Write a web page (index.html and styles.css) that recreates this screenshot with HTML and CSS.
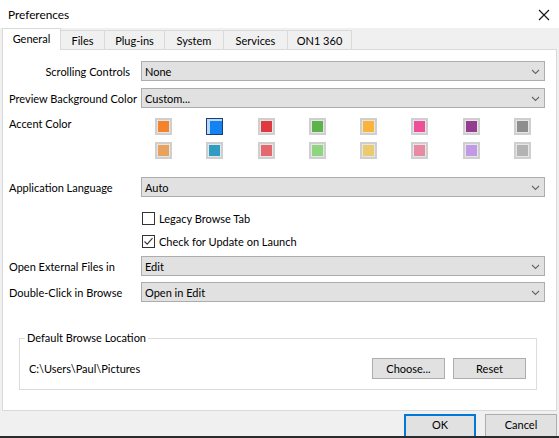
FILE: index.html
```html
<!DOCTYPE html>
<html>
<head>
<meta charset="utf-8">
<link rel="stylesheet" href="styles.css">
</head>
<body>
<div class="window">
  <div class="titlebar">
    <span class="title">Preferences</span>
    <svg class="close" width="12" height="12" viewBox="0 0 12 12"><path d="M1 1 L11 11 M11 1 L1 11" stroke="#111" stroke-width="1.1" fill="none"/></svg>
  </div>
  <div class="tabs">
    <div class="tab active t-general">General</div>
    <div class="tab t-files">Files</div>
    <div class="tab t-plug">Plug-ins</div>
    <div class="tab t-system">System</div>
    <div class="tab t-services">Services</div>
    <div class="tab t-on1">ON1 360</div>
  </div>
  <div class="panel">
    <div class="row r1">
      <div class="label right">Scrolling Controls</div>
      <div class="select"><span>None</span><svg class="chev" width="9" height="6" viewBox="0 0 9 6"><path d="M1 1 L4.5 4.5 L8 1" stroke="#666" stroke-width="1.1" fill="none"/></svg></div>
    </div>
    <div class="row r2">
      <div class="label">Preview Background Color</div>
      <div class="select"><span>Custom...</span><svg class="chev" width="9" height="6" viewBox="0 0 9 6"><path d="M1 1 L4.5 4.5 L8 1" stroke="#666" stroke-width="1.1" fill="none"/></svg></div>
    </div>
    <div class="row r-accent">
      <div class="label accent-label">Accent Color</div>
      <div class="swatches">
        <div class="sw" style="background:#f5832a"></div>
        <div class="sw sel" style="background:#1383f3"></div>
        <div class="sw" style="background:#df3a40"></div>
        <div class="sw" style="background:#5db34a"></div>
        <div class="sw" style="background:#fbb33b"></div>
        <div class="sw" style="background:#ef4e98"></div>
        <div class="sw" style="background:#943c92"></div>
        <div class="sw" style="background:#8e8e8e"></div>
        <div class="sw" style="background:#e7a35e"></div>
        <div class="sw" style="background:#2f9cc3"></div>
        <div class="sw" style="background:#e56870"></div>
        <div class="sw" style="background:#8fd57f"></div>
        <div class="sw" style="background:#eacb6f"></div>
        <div class="sw" style="background:#e78ba5"></div>
        <div class="sw" style="background:#c299e4"></div>
        <div class="sw" style="background:#b3b3b3"></div>
      </div>
    </div>
    <div class="row r-lang">
      <div class="label">Application Language</div>
      <div class="select"><span>Auto</span><svg class="chev" width="9" height="6" viewBox="0 0 9 6"><path d="M1 1 L4.5 4.5 L8 1" stroke="#666" stroke-width="1.1" fill="none"/></svg></div>
    </div>
    <div class="row r-cb1">
      <div class="label"></div>
      <div class="check"><span class="box"></span><span>Legacy Browse Tab</span></div>
    </div>
    <div class="row r-cb2">
      <div class="label"></div>
      <div class="check"><span class="box"><svg width="11" height="11" viewBox="0 0 11 11"><path d="M1.5 5.5 L4.2 8.2 L9.5 2.2" stroke="#333" stroke-width="1.1" fill="none"/></svg></span><span>Check for Update on Launch</span></div>
    </div>
    <div class="row r-ext">
      <div class="label">Open External Files in</div>
      <div class="select"><span>Edit</span><svg class="chev" width="9" height="6" viewBox="0 0 9 6"><path d="M1 1 L4.5 4.5 L8 1" stroke="#666" stroke-width="1.1" fill="none"/></svg></div>
    </div>
    <div class="row r-dbl">
      <div class="label">Double-Click in Browse</div>
      <div class="select"><span>Open in Edit</span><svg class="chev" width="9" height="6" viewBox="0 0 9 6"><path d="M1 1 L4.5 4.5 L8 1" stroke="#666" stroke-width="1.1" fill="none"/></svg></div>
    </div>
    <fieldset class="group">
      <legend>Default Browse Location</legend>
      <div class="group-row">
        <span class="path">C:\Users\Paul\Pictures</span>
        <div class="group-buttons">
          <div class="btn">Choose...</div>
          <div class="btn">Reset</div>
        </div>
      </div>
    </fieldset>
  </div>
  <div class="footer">
    <div class="footer-buttons">
      <div class="btn big ok">OK</div>
      <div class="btn big">Cancel</div>
    </div>
  </div>
</div>
</body>
</html>
```

FILE: styles.css
```css
* { box-sizing: border-box; }
html, body { margin: 0; padding: 0; }
body {
  width: 559px;
  height: 438px;
  overflow: hidden;
  background: #f0f0f0;
  font-family: Lato, "Noto Sans", sans-serif;
  font-size: 11px;
  color: #000;
}
.window {
  width: 559px;
  height: 438px;
  display: flex;
  flex-direction: column;
}
.titlebar {
  height: 28px;
  background: #fff;
  display: flex;
  align-items: center;
  justify-content: space-between;
  padding: 0 8px 0 8px;
  flex: none;
}
.title { font-size: 11.8px; }
.close { margin-right: 1px; margin-top: 1px; }
.tabs {
  height: 21px;
  display: flex;
  align-items: flex-end;
  padding-left: 2px;
  background: #f0f0f0;
  flex: none;
  position: relative;
  z-index: 1;
}
.tab {
  height: 19px;
  border: 1px solid #d9d9d9;
  border-left: none;
  border-bottom: none;
  background: #f0f0f0;
  display: flex;
  align-items: center;
  justify-content: center;
}
.tab.active {
  height: 22px;
  background: #fff;
  border-left: 1px solid #d9d9d9;
  margin-bottom: -1px;
  padding-bottom: 3px;
}
.t-general { width: 59px; }
.t-files { width: 44px; }
.t-plug { width: 60px; }
.t-system { width: 59px; }
.t-services { width: 64px; }
.t-on1 { width: 64px; }
.panel {
  height: 362px;
  margin: 0 2px 0 2px;
  border: 1px solid #d9d9d9;
  background: #fff;
  padding: 11px 11px 0 6px;
  display: flex;
  flex-direction: column;
  flex: none;
}
.row {
  display: flex;
  align-items: center;
}
.label {
  width: 132px;
  flex: none;
  white-space: nowrap;
}
.label.right {
  text-align: right;
  padding-right: 11px;
}
.select {
  flex: 1;
  height: 20px;
  background: #e1e1e1;
  border: 1px solid #adadad;
  display: flex;
  align-items: center;
  justify-content: space-between;
  padding: 0 4px 0 3px;
}
.chev { margin-top: 1px; }
.r2 { margin-top: 7px; }
.r-accent { margin-top: 10px; align-items: flex-start; }
.accent-label { margin-top: -1px; line-height: 14px; }
.swatches {
  margin-left: 14px;
  display: grid;
  grid-template-columns: repeat(8, 17px);
  column-gap: 34.3px;
  row-gap: 7px;
}
.sw {
  width: 17px;
  height: 17px;
  border: 2px solid #cfcfcf;
  outline: 1px solid #e6e6e6;
  outline-offset: -3px;
}
.sw.sel {
  border: 1px solid #1b3f73;
  outline: none;
  box-shadow: inset 3px 0 0 #b8d8f8, inset 0 2px 0 #b8d8f8;
}
.r-lang { margin-top: 18px; }
.check {
  display: flex;
  align-items: center;
  height: 14px;
  margin-left: 1px;
}
.box {
  width: 13px;
  height: 13px;
  border: 1px solid #333;
  background: #fff;
  margin-right: 4px;
  display: flex;
  align-items: center;
  justify-content: center;
  flex: none;
}
.r-cb1 { margin-top: 14px; }
.r-cb2 { margin-top: 9px; }
.r-ext { margin-top: 8px; }
.r-dbl { margin-top: 6px; }
.group {
  margin: 28px 8px 0 10px;
  border: 1px solid #dcdcdc;
  padding: 12px 10px 10px 9px;
  min-width: 0;
}
.group legend {
  padding: 0 2px;
  margin-left: -4px;
  line-height: 16px;
}
.group-row {
  display: flex;
  align-items: center;
  justify-content: space-between;
  height: 21px;
}
.group-buttons {
  display: flex;
  gap: 8px;
}
.btn {
  width: 73px;
  height: 21px;
  background: #e1e1e1;
  border: 1px solid #adadad;
  display: flex;
  align-items: center;
  justify-content: center;
}
.footer {
  flex: 1;
  display: flex;
  flex-direction: column;
  justify-content: flex-end;
  border-bottom: 2px solid #2b2b2b;
}
.footer-buttons {
  display: flex;
  justify-content: flex-end;
  gap: 9px;
  padding-right: 2px;
  height: 22px;
  overflow: hidden;
}
.btn.big {
  width: 72px;
  height: 24px;
  padding-bottom: 3px;
}
.btn.ok {
  border: 2px solid #0078d7;
}
```
